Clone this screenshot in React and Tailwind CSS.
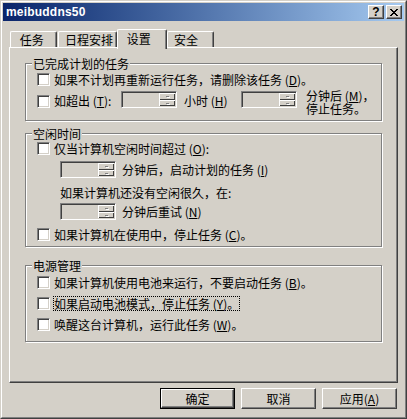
import React from 'react';

const font = "font-['Noto_Sans_CJK_SC','Liberation_Sans',sans-serif]";

const Check = () => (
  <span className="block w-[13px] h-[13px] shrink-0 bg-white border border-t-[#808080] border-l-[#808080] border-r-white border-b-white shadow-[inset_1px_1px_0_#404040,inset_-1px_-1px_0_#d4d0c8]" />
);

const SpinHalf = ({ h }) => (
  <div className={`${h} flex items-center justify-center bg-[#d4d0c8] shadow-[inset_1px_1px_0_#fff,inset_-1px_-1px_0_#404040]`}>
    <span className="block w-[3px] h-[1px] bg-[#808080] shadow-[1px_1px_0_#fff]" />
  </div>
);

const Spin = () => (
  <div className="flex w-[56px] h-[17px] shrink-0 p-[1px] border border-t-[#808080] border-l-[#808080] border-r-white border-b-white shadow-[inset_1px_1px_0_#404040,inset_-1px_-1px_0_#d4d0c8]">
    <div className="flex-1" />
    <div className="w-[16px] flex flex-col">
      <SpinHalf h="h-[7px]" />
      <SpinHalf h="h-[6px]" />
    </div>
  </div>
);

const K = ({ c }) => (
  <span>
    {' '}(<u>{c}</u>)
  </span>
);

const Group = ({ label, className, children }) => (
  <div className={`relative w-[357px] border border-[#808080] shadow-[1px_1px_0_#fff,inset_1px_1px_0_#fff] ${className}`}>
    <span className="absolute left-[6px] top-[-7px] px-[1px] bg-[#d4d0c8] leading-[13px]">{label}</span>
    {children}
  </div>
);

const CheckRow = ({ children, focus }) => (
  <div className="flex items-center h-[13px]">
    <Check />
    <span className={`ml-[4px] leading-[13px] whitespace-nowrap ${focus ? 'outline outline-1 outline-dotted outline-black outline-offset-0' : ''}`}>
      {children}
    </span>
  </div>
);

const Button = ({ children, def }) => (
  <div className={`w-[75px] h-[21px] ${def ? 'border border-black' : ''}`}>
    <div className="w-full h-full flex items-center justify-center bg-[#d4d0c8] border border-t-white border-l-white border-r-[#404040] border-b-[#404040] shadow-[inset_-1px_-1px_0_#808080]">
      {children}
    </div>
  </div>
);

const Tab = ({ children, w, sel, className = '' }) => (
  <div
    className={`${w} ${sel ? 'h-[20px] mb-[-2px] relative z-10 pt-[1px]' : 'h-[16px] pt-[1px]'} shrink-0 bg-[#d4d0c8] border-t border-l border-t-white border-l-white border-r border-r-[#404040] shadow-[inset_-1px_0_0_#808080] rounded-t-[2px] pl-[6px] leading-[13px] ${className}`}
  >
    {children}
  </div>
);

export default function App() {
  return (
    <div className={`w-[407px] h-[419px] bg-[#d4d0c8] border border-t-[#d4d0c8] border-l-[#d4d0c8] border-r-[#404040] border-b-[#404040] text-[12px] text-black ${font}`}>
      <div className="w-full h-full border border-t-white border-l-white border-r-[#808080] border-b-[#808080] p-[1px] flex flex-col">
        {/* title bar */}
        <div className="h-[18px] shrink-0 flex items-center bg-gradient-to-r from-[#0a246a] to-[#a6caf0] pl-[3px] pr-[2px]">
          <span className="font-['Liberation_Sans',sans-serif] font-bold text-[12px] text-white tracking-[0.2px]">meibuddns50</span>
          <div className="ml-auto flex gap-[2px]">
            <div className="w-[16px] h-[14px] flex items-center justify-center bg-[#d4d0c8] border border-t-white border-l-white border-r-[#404040] border-b-[#404040] shadow-[inset_-1px_-1px_0_#808080]">
              <span className="font-['Liberation_Sans',sans-serif] font-bold text-[12px] leading-[12px]">?</span>
            </div>
            <div className="w-[16px] h-[14px] flex items-center justify-center bg-[#d4d0c8] border border-t-white border-l-white border-r-[#404040] border-b-[#404040] shadow-[inset_-1px_-1px_0_#808080]">
              <svg width="8" height="7" viewBox="0 0 8 7" shapeRendering="crispEdges">
                <path d="M0 0h2v1h-2zM6 0h2v1h-2zM1 1h2v1h-2zM5 1h2v1h-2zM2 2h4v1h-4zM3 3h2v1h-2zM2 4h4v1h-4zM1 5h2v1h-2zM5 5h2v1h-2zM0 6h2v1h-2zM6 6h2v1h-2z" fill="#000" />
              </svg>
            </div>
          </div>
        </div>

        {/* tabs */}
        <div className="mt-[8px] h-[18px] flex items-end pl-[7px]">
          <Tab w="w-[47px]">&nbsp;任务</Tab>
          <Tab w="w-[59px]" className="ml-[1px]">日程安排</Tab>
          <Tab w="w-[50px]" sel className="pt-[2px]">&nbsp;设置</Tab>
          <Tab w="w-[47px]" className="pl-[2px]">安全</Tab>
        </div>

        {/* panel */}
        <div className="ml-[6px] w-[389px] h-[336px] shrink-0 border-t border-l border-t-white border-l-white border-r border-b border-r-[#404040] border-b-[#404040] shadow-[inset_-1px_-1px_0_#808080] pl-[15px] pt-[15px]">
          <Group label="已完成计划的任务" className="h-[58px] pt-[9px] pl-[11px]">
            <CheckRow>
              如果不计划再重新运行任务，请删除该任务<K c="D" />。
            </CheckRow>
            <div className="mt-[5px] flex items-start">
              <div className="mt-[4px]"><Check /></div>
              <span className="ml-[4px] mt-[3px] w-[67px] leading-[13px] whitespace-nowrap">
                如超出<K c="T" />:
              </span>
              <Spin />
              <span className="ml-[7px] mt-[3px] w-[57px] leading-[13px] whitespace-nowrap">
                小时<K c="H" />
              </span>
              <Spin />
              <span className="ml-[9px] mt-[-2px] whitespace-nowrap leading-[13px]">
                分钟后<K c="M" />，<br />停止任务。
              </span>
            </div>
          </Group>

          <Group label="空闲时间" className="mt-[12px] h-[114px] pt-[8px] pl-[11px]">
            <CheckRow>
              仅当计算机空闲时间超过<K c="O" />:
            </CheckRow>
            <div className="mt-[6px] ml-[23px] flex items-center">
              <Spin />
              <span className="ml-[6px] leading-[13px] whitespace-nowrap">
                分钟后，启动计划的任务<K c="I" />
              </span>
            </div>
            <div className="mt-[8px] ml-[23px] leading-[13px] whitespace-nowrap">如果计算机还没有空闲很久，在:</div>
            <div className="mt-[4px] ml-[23px] flex items-center">
              <Spin />
              <span className="ml-[6px] leading-[13px] whitespace-nowrap">
                分钟后重试<K c="N" />
              </span>
            </div>
            <div className="mt-[8px]">
              <CheckRow>
                如果计算机在使用中，停止任务<K c="C" />。
              </CheckRow>
            </div>
          </Group>

          <Group label="电源管理" className="mt-[18px] h-[77px] pt-[10px] pl-[11px] flex flex-col gap-[8px]">
            <CheckRow>
              如果计算机使用电池来运行，不要启动任务<K c="B" />。
            </CheckRow>
            <CheckRow focus>
              如果启动电池模式，停止任务<K c="Y" />。
            </CheckRow>
            <CheckRow>
              唤醒这台计算机，运行此任务<K c="W" />。
            </CheckRow>
          </Group>
        </div>

        {/* buttons */}
        <div className="mt-[5px] flex justify-end gap-[6px] pr-[7px]">
          <Button def>确定</Button>
          <Button>取消</Button>
          <Button>应用<K c="A" /></Button>
        </div>
      </div>
    </div>
  );
}
